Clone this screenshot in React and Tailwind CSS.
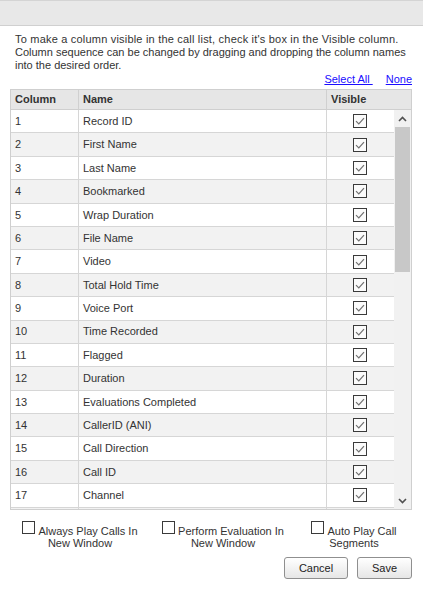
import React from "react";

const rows = [
  "Record ID",
  "First Name",
  "Last Name",
  "Bookmarked",
  "Wrap Duration",
  "File Name",
  "Video",
  "Total Hold Time",
  "Voice Port",
  "Time Recorded",
  "Flagged",
  "Duration",
  "Evaluations Completed",
  "CallerID (ANI)",
  "Call Direction",
  "Call ID",
  "Channel",
  "Agent",
  "Group",
];

function Check() {
  return (
    <svg width="14" height="14" viewBox="0 0 14 14" className="block">
      <rect x="0.5" y="0.5" width="13" height="13" fill="#fbfbfb" stroke="#3a3a3a" />
      <path d="M3 7.2 L5.8 10 L11 4.2" fill="none" stroke="#707070" strokeWidth="1.2" />
    </svg>
  );
}

function EmptyBox() {
  return (
    <span className="inline-block w-[13px] h-[13px] border border-[#3a3a3a] bg-white align-[1px] mr-[3px]" />
  );
}

export default function App() {
  return (
    <div
      className="w-[423px] h-[593px] bg-white text-[#333] text-[11px] overflow-hidden"
      style={{ fontFamily: '"Liberation Sans", Arial, sans-serif' }}
    >
      <div className="h-[26px] bg-[#e8e8e8] border-t border-[#d4d4d4] border-b border-b-[#d0d0d0]" />
      <div className="pl-[15px] pt-[7px] leading-[13px] whitespace-nowrap">
        <div className="tracking-[0.2px]">
          To make a column visible in the call list, check it's box in the Visible column.
        </div>
        <div>Column sequence can be changed by dragging and dropping the column names</div>
        <div>into the desired order.</div>
      </div>
      <div className="flex justify-end gap-[13px] pr-[11px] pt-[1px] h-[17px] leading-[13px] text-[#1a0dff]">
        <a className="underline cursor-pointer">Select All&nbsp;</a>
        <a className="underline cursor-pointer">None</a>
      </div>
      <div className="ml-[10px] w-[402px] border border-[#cfcfcf]">
        <div className="flex h-[20px] bg-[#e6e6e6] font-bold border-b border-[#cfcfcf] leading-[19px]">
          <div className="w-[68px] pl-[4px] border-r border-[#d0d0d0]">Column</div>
          <div className="w-[248px] pl-[4px] border-r border-[#d0d0d0]">Name</div>
          <div className="flex-1 pl-[4px]">Visible</div>
        </div>
        <div className="flex h-[399px] overflow-hidden">
          <div className="w-[383px]">
            {rows.map((name, i) => (
              <div
                key={i}
                className={`flex h-[23.4px] border-b border-[#d6d6d6] items-center ${
                  i % 2 === 0 ? "bg-white" : "bg-[#f2f2f2]"
                }`}
              >
                <div className="w-[68px] h-full flex items-center pl-[4px] border-r border-[#d6d6d6]">
                  {i + 1}
                </div>
                <div className="w-[248px] h-full flex items-center pl-[4px] border-r border-[#d6d6d6]">
                  {name}
                </div>
                <div className="flex-1 h-full flex items-center justify-center pr-[1px]">
                  <Check />
                </div>
              </div>
            ))}
          </div>
          <div className="w-[17px] bg-[#f1f1f1] flex flex-col">
            <div className="h-[17px] flex items-center justify-center">
              <svg width="9" height="6" viewBox="0 0 9 6">
                <path d="M1 5 L4.5 1.5 L8 5" fill="none" stroke="#505050" strokeWidth="1.6" />
              </svg>
            </div>
            <div className="mx-[1px] h-[145px] bg-[#c8c8c8]" />
            <div className="flex-1" />
            <div className="h-[17px] flex items-center justify-center">
              <svg width="9" height="6" viewBox="0 0 9 6">
                <path d="M1 1 L4.5 4.5 L8 1" fill="none" stroke="#505050" strokeWidth="1.6" />
              </svg>
            </div>
          </div>
        </div>
      </div>
      <div className="flex pt-[11px] leading-[12px]">
        <div className="w-[120px] ml-[20px] text-center">
          <EmptyBox />Always Play Calls In
          <br />
          New Window
        </div>
        <div className="w-[124px] ml-[21px] text-center">
          <EmptyBox />Perform Evaluation In
          <br />
          New Window
        </div>
        <div className="w-[90px] ml-[24px] text-center">
          <EmptyBox />Auto Play Call
          <br />
          Segments
        </div>
      </div>
      <div className="flex justify-end gap-[9px] pr-[11px] pt-[8px]">
        <button className="w-[64px] h-[22px] rounded-[3px] border border-[#8f8f8f] bg-gradient-to-b from-white to-[#e6e6e6] text-[11px] text-[#222]">
          Cancel
        </button>
        <button className="w-[55px] h-[22px] rounded-[3px] border border-[#8f8f8f] bg-gradient-to-b from-white to-[#e6e6e6] text-[11px] text-[#222]">
          Save
        </button>
      </div>
    </div>
  );
}
